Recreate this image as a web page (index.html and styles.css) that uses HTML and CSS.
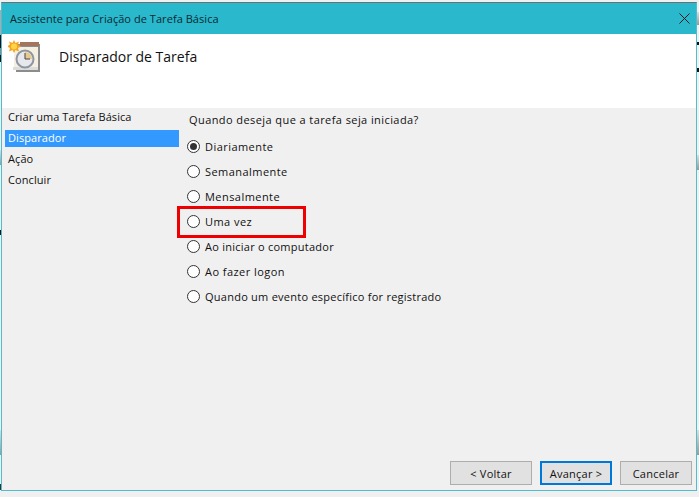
FILE: index.html
```html
<!DOCTYPE html>
<html lang="pt-BR">
<head>
    <meta charset="UTF-8">
    <title>Assistente para Criação de Tarefa Básica</title>
    <link rel="stylesheet" href="styles.css">
</head>
<body>
    <div class="window">
        <div class="titlebar">
            <span class="title">Assistente para Criação de Tarefa Básica</span>
            <svg class="close" width="11" height="11" viewBox="0 0 11 11">
                <path d="M0.5 0.5 L10.5 10.5 M10.5 0.5 L0.5 10.5" stroke="#1a1a1a" stroke-width="1" fill="none"/>
            </svg>
        </div>

        <div class="header">
            <svg class="task-icon" width="32" height="32" viewBox="0 0 32 32">
                <rect x="8" y="4" width="24" height="28" fill="#8c8c8c"/>
                <rect x="6" y="7" width="24" height="23" fill="#f5efe2"/>
                <rect x="5" y="27" width="25" height="3" fill="#dcdcdc"/>
                <rect x="12" y="2" width="19" height="4" fill="#a5745c"/>
                <circle cx="17" cy="19" r="8.500" fill="#e6e8ee" stroke="#8f96a0" stroke-width="2"/>
                <path d="M17 12 A7 7 0 0 1 24 19 L17 19 Z" fill="#e7c98e"/>
                <path d="M17 13 V19 H22" stroke="#444" stroke-width="1" fill="none"/>
                <path d="M6 0 L7.500 3 L11 1.500 L10 4.500 L13 6.500 L10 8 L11 11.500 L7.500 10 L6 13 L4.500 10 L1 11.500 L2 8 L-1 6.500 L2 4.500 L1 1.500 L4.500 3 Z" fill="#f4a51c"/>
                <circle cx="6" cy="6.500" r="3" fill="#ffd24a"/>
            </svg>
            <h1 class="heading">Disparador de Tarefa</h1>
        </div>

        <div class="content">
            <ul class="steps">
                <li>Criar uma Tarefa Básica</li>
                <li class="active">Disparador</li>
                <li>Ação</li>
                <li>Concluir</li>
            </ul>

            <div class="main">
                <p class="question">Quando deseja que a tarefa seja iniciada?</p>
                <div class="options">
                    <label class="option"><span class="radio checked"></span>Diariamente</label>
                    <label class="option"><span class="radio"></span>Semanalmente</label>
                    <label class="option"><span class="radio"></span>Mensalmente</label>
                    <label class="option marked"><span class="radio"></span>Uma vez</label>
                    <label class="option long"><span class="radio"></span>Ao iniciar o computador</label>
                    <label class="option"><span class="radio"></span>Ao fazer logon</label>
                    <label class="option long"><span class="radio"></span>Quando um evento específico for registrado</label>
                </div>
            </div>
        </div>

        <div class="footer">
            <button class="btn btn-back">&lt; Voltar</button>
            <button class="btn btn-next">Avançar &gt;</button>
            <button class="btn">Cancelar</button>
        </div>
    </div>
</body>
</html>
```

FILE: styles.css
```css
* {
    box-sizing: border-box;
}

body {
    margin: 0;
    height: 497px;
    overflow: hidden;
    /* restos da janela de trás nas bordas da captura */
    background:
        linear-gradient(#f0f0f0 10px, #aaa 10px, #aaa 35px, #111 35px, #111 48px, #888 48px, #888 55px, #111 55px, #111 62px, #f0f0f0 62px, #f0f0f0 150px, #ddd 150px, #999 165px, #f0f0f0 165px, #f0f0f0 230px, #111 230px, #111 235px, #f0f0f0 235px, #f0f0f0 430px, #ddd 430px, #999 455px, #f0f0f0 455px, #f0f0f0 484px, #333 484px, #333 490px, #f0f0f0 490px) left top / 1px 497px no-repeat,
        linear-gradient(#f0f0f0 12px, #ddd 12px, #999 25px, #f0f0f0 25px, #f0f0f0 42px, #111 42px, #111 45px, #f0f0f0 45px, #f0f0f0 68px, #111 68px, #111 72px, #f0f0f0 72px, #f0f0f0 155px, #ddd 155px, #999 170px, #f0f0f0 170px, #f0f0f0 430px, #ddd 430px, #999 455px, #f0f0f0 455px) right top / 2px 497px no-repeat,
        #f0f0f0;
    font-family: "Open Sans", "Noto Sans", sans-serif;
    font-size: 11px;
    letter-spacing: 0.25px;
    color: #111;
    padding: 2px 2px 0 1px;
}

.window {
    width: 696px;
    height: 489px;
    border: 1px solid #4fbdd0;
    border-top: 1px solid #6f6f6f;
    background: #f0f0f0;
    display: flex;
    flex-direction: column;
}

.titlebar {
    height: 31px;
    background: #2ab8cd;
    display: flex;
    align-items: center;
    justify-content: space-between;
    padding: 0 5px 0 8px;
    flex-shrink: 0;
}

.title {
    color: #0c2a30;
    letter-spacing: 0.05px;
}

.close {
    margin-right: 1px;
}

.header {
    height: 74px;
    background: #fff;
    display: flex;
    align-items: flex-start;
    padding: 6px 0 0 6px;
    flex-shrink: 0;
}

.heading {
    margin: 7px 0 0 19px;
    font-size: 14px;
    font-weight: normal;
    letter-spacing: 0;
}

.content {
    flex: 1;
    display: flex;
}

.steps {
    list-style: none;
    width: 174px;
    margin: 1px 0 0 3px;
    padding: 0;
    flex-shrink: 0;
    letter-spacing: 0.08px;
}

.steps li {
    height: 21px;
    line-height: 17px;
    padding-left: 3px;
}

.steps li:first-child {
    line-height: 15px;
}

.steps .active {
    height: 17px;
    margin-bottom: 3px;
    line-height: 16px;
    background: #3399ff;
    color: #fff;
}

.main {
    padding: 4px 0 0 6px;
    flex: 1;
}

.question {
    margin: 0 0 6px 4px;
    line-height: 16px;
    letter-spacing: 0.42px;
}

.option {
    display: flex;
    align-items: center;
    height: 25px;
    width: max-content;
    position: relative;
    letter-spacing: 0.45px;
}

.option.long {
    letter-spacing: 0.25px;
}

.radio {
    width: 13px;
    height: 13px;
    border: 1px solid #333;
    border-radius: 50%;
    background: #fff;
    margin: 0 5px 0 2px;
    position: relative;
}

.radio.checked::after {
    content: "";
    position: absolute;
    left: 2px;
    top: 2px;
    width: 7px;
    height: 7px;
    border-radius: 50%;
    background: #333;
}

/* caixa vermelha por cima da opção */
.marked::before {
    content: "";
    box-sizing: border-box;
    position: absolute;
    left: -8px;
    top: -3px;
    width: 129px;
    height: 32px;
    border: 3px solid #ee0000;
}

.footer {
    height: 32px;
    display: flex;
    justify-content: flex-end;
    align-items: flex-end;
    padding: 0 4px 5px 0;
    gap: 8px;
    flex-shrink: 0;
}

.btn {
    width: 72px;
    height: 24px;
    padding: 0;
    background: #e1e1e1;
    border: 1px solid #adadad;
    border-radius: 0;
    font: inherit;
    letter-spacing: inherit;
    color: #111;
}

.btn-back {
    width: 82px;
}

.btn-next {
    border: 2px solid #0078d7;
}
```
